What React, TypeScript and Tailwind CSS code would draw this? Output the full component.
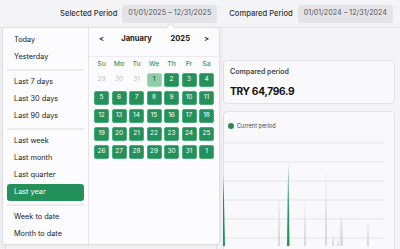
import React from 'react';

const presets = [
  ['Today', 'Yesterday'],
  ['Last 7 days', 'Last 30 days', 'Last 90 days'],
  ['Last week', 'Last month', 'Last quarter', 'Last year'],
  ['Week to date', 'Month to date'],
];

const weekdays = ['Su', 'Mo', 'Tu', 'We', 'Th', 'Fr', 'Sa'];

// January 2025 grid, leading days from December and one trailing day from February
const days: { label: number; muted?: boolean; start?: boolean }[] = [
  { label: 29, muted: true },
  { label: 30, muted: true },
  { label: 31, muted: true },
  { label: 1, start: true },
  ...Array.from({ length: 30 }, (_, i) => ({ label: i + 2 })),
  { label: 1 },
];

const greySpikes = [
  [56, 57],
  [82, 65],
  [103, 32],
  [110, 97],
  [115, 103],
  [118, 75],
  [119, 80],
  [145, 84],
];

function Chart() {
  return (
    <svg width="162" height="110" viewBox="0 0 162 110" className="block">
      {[7, 26, 45, 64, 83, 102].map((y) => (
        <line key={y} x1="0" x2="162" y1={y} y2={y} stroke="#e3e3e8" strokeWidth="1" />
      ))}
      {greySpikes.map(([x, top]) => (
        <polygon key={x} points={`${x - 1.2},110 ${x},${top} ${x + 1.2},110`} fill="#dadade" />
      ))}
      <polygon points="-1,110 0.5,40 2,110" fill="#24915b" />
      <polygon points="64,110 65.2,28 66.5,110" fill="#24915b" />
    </svg>
  );
}

export default function App() {
  return (
    <div className="relative w-[400px] h-[249px] overflow-hidden bg-[#f4f4f6] font-['Inter',sans-serif] text-[#222]">
      {/* Period selector bar */}
      <div className="h-[28px] border-b border-[#e4e4e8] flex items-center justify-end pr-[7px]">
        <span className="text-[7.6px] font-medium text-[#333]">Selected Period</span>
        <span className="ml-[5px] h-[18px] px-[6px] flex items-center rounded-[3px] bg-[#e4e4e8] text-[7.2px] text-[#555]">
          01/01/2025 – 12/31/2025
        </span>
        <span className="ml-[12px] text-[7.6px] font-medium text-[#333]">Compared Period</span>
        <span className="ml-[5px] h-[18px] px-[6px] flex items-center rounded-[3px] bg-[#e4e4e8] text-[7.2px] text-[#555]">
          01/01/2024 – 12/31/2024
        </span>
      </div>

      {/* Dashboard cards */}
      <div className="grid grid-cols-[212px_172px] gap-x-[6px] gap-y-[7px] pl-[5px] pt-[32px]">
        <div className="h-[44px] rounded-[4px] border border-[#e2e2e6] bg-[#f9f9fb] px-[7px] py-[6px]">
          <div className="text-[7px] font-semibold text-[#444]">Selected period</div>
        </div>
        <div className="h-[44px] rounded-[4px] border border-[#e2e2e6] bg-[#f9f9fb] px-[6px] pt-[5px]">
          <div className="text-[7px] font-semibold text-[#444] leading-[11px]">Compared period</div>
          <div className="mt-[8px] text-[10.2px] font-bold tracking-[-0.3px] text-[#111] leading-[13px]">TRY 64,796.9</div>
        </div>
        <div className="h-[150px] rounded-[4px] border border-[#e2e2e6] bg-[#f9f9fb]" />
        <div className="h-[150px] rounded-t-[4px] border border-[#e2e2e6] bg-[#f9f9fb]">
          <div className="flex items-center gap-[3px] pl-[4px] pt-[10px]">
            <span className="w-[6px] h-[6px] rounded-full bg-[#2b8a5c]" />
            <span className="text-[5.6px] text-[#444]">Current period</span>
          </div>
          <div className="mt-[6px] -ml-[1px]">
            <Chart />
          </div>
        </div>
      </div>

      {/* Date range popover */}
      <div className="absolute left-[2px] top-[27px] w-[218px] h-[218px] rounded-[3px] border border-[#dedee2] bg-[#fcfcfe] shadow-[0_2px_6px_rgba(0,0,0,0.08)] flex">
        <div className="absolute -top-[4px] left-[164px] w-[7px] h-[7px] rotate-45 bg-[#fcfcfe] border-l border-t border-[#dedee2]" />

        <div className="w-[86px] border-r border-[#e4e4e8] px-[4px] pt-[4px]">
          {presets.map((group, gi) => (
            <div key={gi}>
              {gi > 0 && <div className="my-[3px] h-[2px] bg-[#ebebef]" />}
              {group.map((item) => (
                <div
                  key={item}
                  className={
                    item === 'Last year'
                      ? 'h-[17px] px-[7px] flex items-center rounded-[3px] bg-[#24915b] text-white text-[7.3px]'
                      : 'h-[17px] px-[7px] flex items-center text-[7.3px] text-[#222]'
                  }
                >
                  {item}
                </div>
              ))}
            </div>
          ))}
        </div>

        <div className="flex-1">
          <div className="h-[29px] border-b border-[#ebebef] px-[5px] pt-[6px] grid grid-cols-7 gap-x-[2.5px] items-start leading-[10px] text-[7.6px] font-bold text-[#222]">
            <span className="text-center font-semibold">&lt;</span>
            <span className="col-span-3 text-center">January</span>
            <span className="col-span-2 text-center">2025</span>
            <span className="text-center font-semibold">&gt;</span>
          </div>
          <div className="px-[5px]">
            <div className="grid grid-cols-7 gap-x-[2.5px] h-[14px] items-center text-[6.8px] font-medium text-[#2e9a63]">
              {weekdays.map((d) => (
                <span key={d} className="text-center">{d}</span>
              ))}
            </div>
            <div className="grid grid-cols-7 gap-x-[2.5px] gap-y-[4px] mt-[2px]">
              {days.map((d, i) => (
                <div
                  key={i}
                  className={
                    d.muted
                      ? 'h-[14px] flex items-center justify-center text-[6.5px] text-[#bdbdc2]'
                      : d.start
                        ? 'h-[14px] flex items-center justify-center rounded-[2px] border border-[#a6dbbb] bg-[#8dcda6] text-[6.5px] text-[#173a28]'
                        : 'h-[14px] flex items-center justify-center rounded-[2px] border border-[#48ad78] bg-[#24915b] text-[6.5px] text-white'
                  }
                >
                  {d.label}
                </div>
              ))}
            </div>
          </div>
        </div>
      </div>
    </div>
  );
}
